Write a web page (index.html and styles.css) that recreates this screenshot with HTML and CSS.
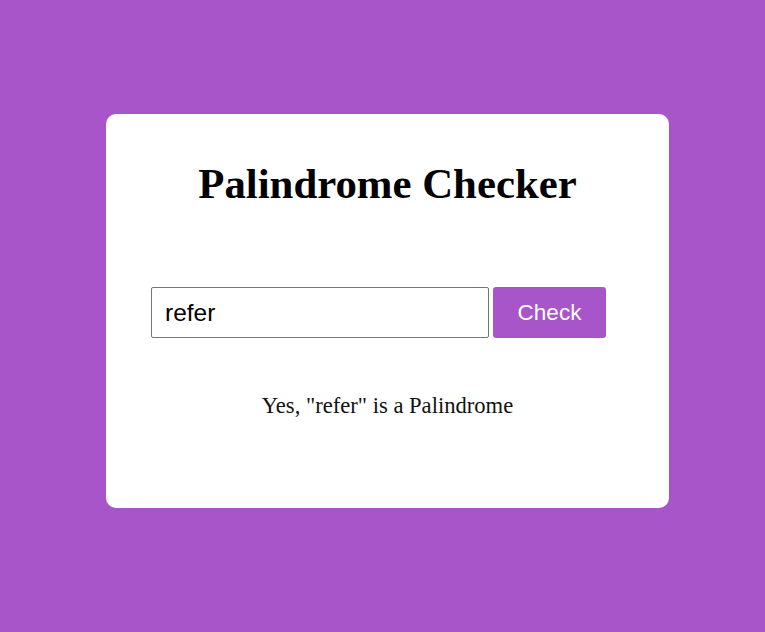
FILE: index.html
```html
<!DOCTYPE html>
<html>
<head>
<meta charset="utf-8">
<link rel="stylesheet" href="styles.css">
</head>
<body>
<div class="card">
  <h1 class="title">Palindrome Checker</h1>
  <div class="form">
    <input class="field" type="text" value="refer">
    <button class="btn">Check</button>
  </div>
  <p class="result">Yes, "refer" is a Palindrome</p>
</div>
</body>
</html>
```
FILE: styles.css
```css
html, body {
  margin: 0;
  padding: 0;
}
body {
  background: #a855c9;
  font-family: "Liberation Serif", "Times New Roman", serif;
  height: 632px;
  padding-top: 114px;
  box-sizing: border-box;
}
.card {
  margin-left: 106px;
  width: 563px;
  height: 394px;
  background: #fff;
  border-radius: 10px;
  box-sizing: border-box;
  padding-top: 1px;
}
.title {
  margin: 44px 0 0;
  text-align: center;
  font-size: 42.8px;
  font-weight: bold;
  line-height: 50px;
}
.form {
  display: flex;
  gap: 4px;
  margin: 78px 0 0 45px;
}
.field {
  width: 338px;
  height: 51px;
  box-sizing: border-box;
  border: 1px solid #767676;
  border-radius: 2px;
  padding: 0 13px;
  font-family: "Liberation Sans", Arial, sans-serif;
  font-size: 24.5px;
  color: #000;
  outline: none;
  margin: 0;
}
.btn {
  width: 113px;
  height: 51px;
  border: none;
  border-radius: 3px;
  background: #a855c9;
  color: #fff;
  font-family: "Liberation Sans", Arial, sans-serif;
  font-size: 22.5px;
  margin: 0;
  padding: 0;
}
.result {
  margin: 55px 0 0;
  text-align: center;
  font-size: 22.6px;
  color: #111;
}
```
